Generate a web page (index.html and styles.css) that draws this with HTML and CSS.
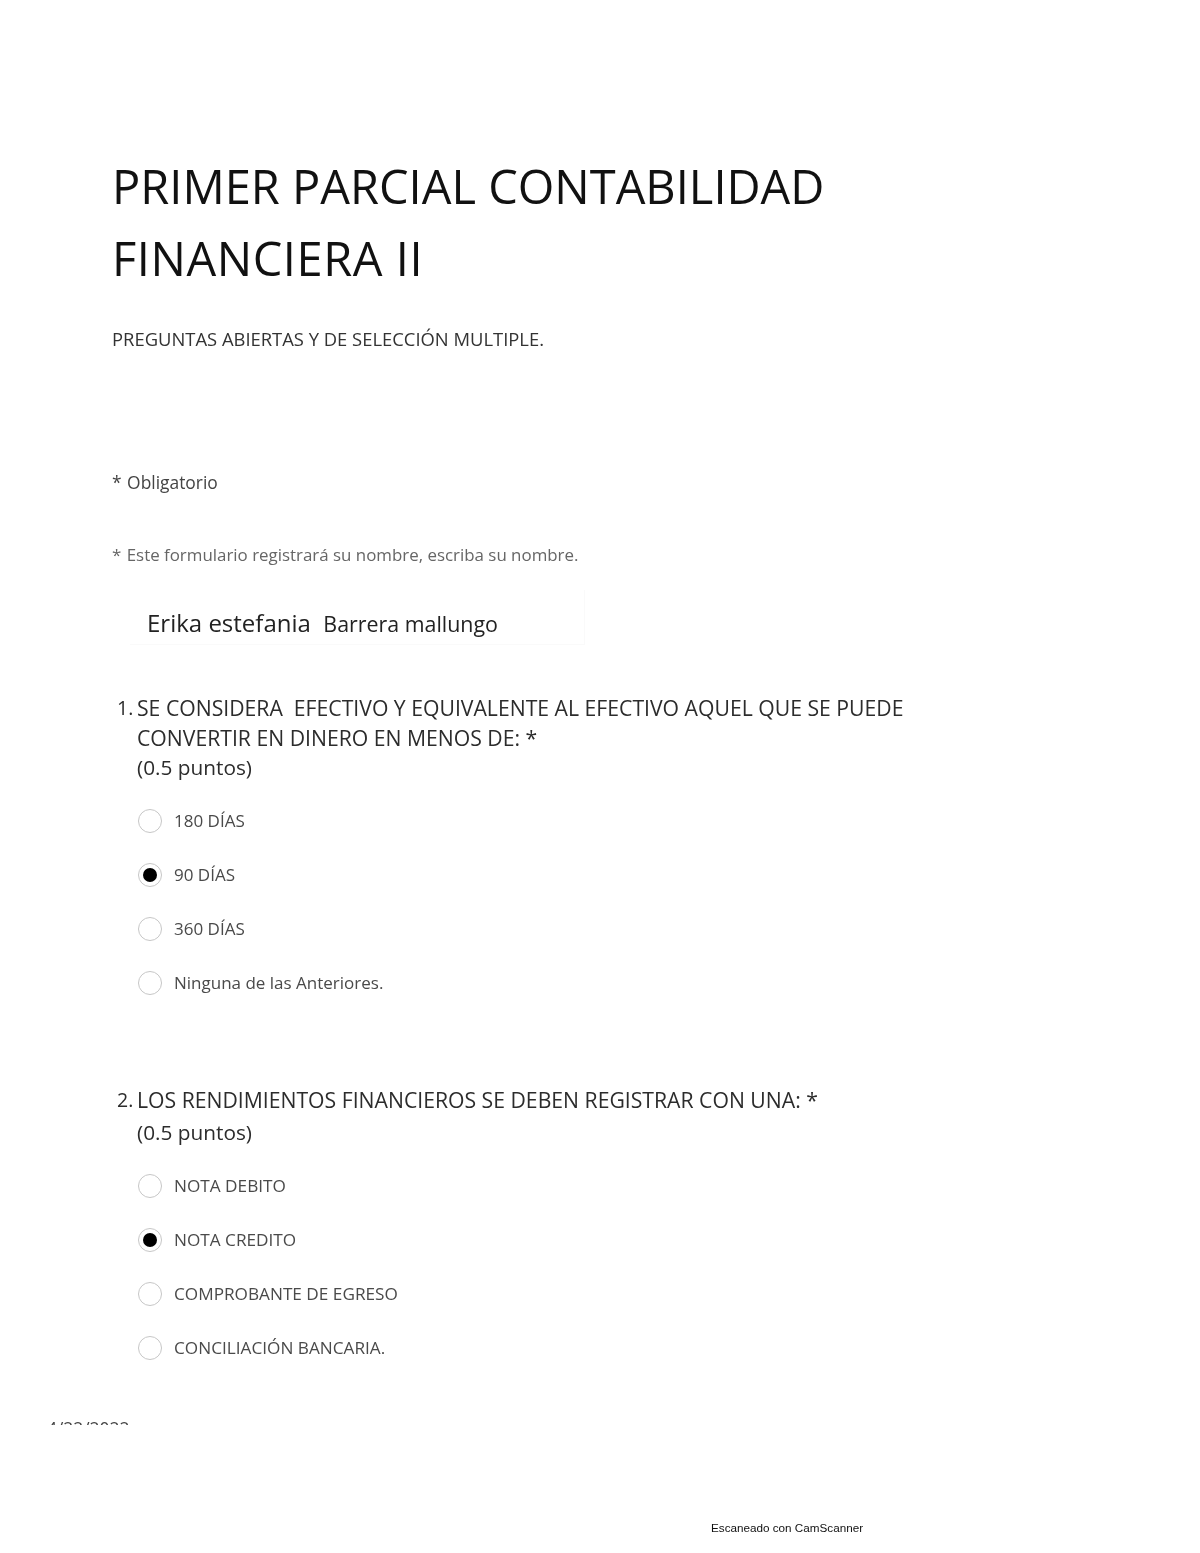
FILE: index.html
```html
<!DOCTYPE html>
<html lang="es">
<head>
<meta charset="utf-8">
<title>Primer parcial</title>
<link rel="stylesheet" href="styles.css">
</head>
<body>
<main class="page">
  <h1 class="title">PRIMER PARCIAL CONTABILIDAD<br><span class="title-second">FINANCIERA II</span></h1>
  <p class="subtitle">PREGUNTAS ABIERTAS Y DE SELECCIÓN MULTIPLE.</p>
  <p class="required">* <span class="req-gap">Obligatorio</span></p>
  <p class="notice">* <span class="req-gap">Este formulario registrará su nombre, escriba su nombre.</span></p>
  <div class="name-box">Erika estefania&nbsp; <span class="name-last">Barrera mallungo</span></div>

  <section class="question q1">
    <div class="q-head"><span class="q-num">1.</span><div>SE CONSIDERA&nbsp; EFECTIVO Y EQUIVALENTE AL EFECTIVO AQUEL QUE SE PUEDE<br>CONVERTIR EN DINERO EN MENOS DE: *<br><span class="points">(0.5 puntos)</span></div></div>
    <ul class="options">
      <li><span class="radio"></span>180 DÍAS</li>
      <li><span class="radio checked"></span>90 DÍAS</li>
      <li><span class="radio"></span>360 DÍAS</li>
      <li><span class="radio"></span>Ninguna de las Anteriores.</li>
    </ul>
  </section>

  <section class="question q2">
    <div class="q-head"><span class="q-num">2.</span><div>LOS RENDIMIENTOS FINANCIEROS SE DEBEN REGISTRAR CON UNA: *<br><span class="points">(0.5 puntos)</span></div></div>
    <ul class="options">
      <li><span class="radio"></span>NOTA DEBITO</li>
      <li><span class="radio checked"></span>NOTA CREDITO</li>
      <li><span class="radio"></span>COMPROBANTE DE EGRESO</li>
      <li><span class="radio"></span>CONCILIACIÓN BANCARIA.</li>
    </ul>
  </section>

  <div class="clipped-date"><span>4/22/2022</span></div>
  <div class="scan-mark">Escaneado con CamScanner</div>
</main>
</body>
</html>
```
FILE: styles.css
```css
html, body {
  margin: 0;
  padding: 0;
  background: #fff;
}
.page {
  width: 1200px;
  height: 1553px;
  box-sizing: border-box;
  padding-top: 150px;
  font-family: "Open Sans", "Noto Sans", sans-serif;
  color: #333;
  overflow: hidden;
  filter: blur(0.7px);
}
.title {
  margin: 0 0 0 112px;
  font-size: 47px;
  font-weight: 400;
  line-height: 72px;
  color: #111;
}
.title-second {
  letter-spacing: 0.55px;
}
.subtitle {
  margin: 33px 0 0 112px;
  font-size: 18.4px;
  line-height: 24px;
  color: #333;
}
.required {
  margin: 119px 0 0 112px;
  font-size: 17.4px;
  line-height: 24px;
  color: #444;
}
.notice {
  margin: 49px 0 0 112px;
  font-size: 16.9px;
  line-height: 24px;
  color: #666;
}
.req-gap {
  margin-left: 1px;
}
.name-box {
  margin: 23px 0 0 130px;
  width: 455px;
  height: 55px;
  box-sizing: border-box;
  padding: 8px 0 0 17px;
  font-size: 24px;
  line-height: 50px;
  color: #222;
  border-bottom: 1px solid #fafafa;
  border-right: 1px solid #fafafa;
}
.name-last {
  font-size: 21.4px;
}
.question {
  font-size: 21.2px;
  color: #2c2c2c;
}
.q1 {
  margin-top: 48px;
}
.q2 {
  margin-top: 74px;
}
.q-head {
  display: flex;
  margin-left: 117px;
  line-height: 29.5px;
}
.q-num {
  width: 20px;
  font-size: 19.5px;
}
.points {
  font-size: 20.8px;
}
.q2 .q-head {
  line-height: 32px;
}
.options {
  list-style: none;
  margin: 11px 0 0 138px;
  padding: 0;
}
.options li {
  display: flex;
  align-items: center;
  height: 54px;
  font-size: 17px;
  color: #4a4a4a;
}
.q2 .options li {
  font-size: 17.2px;
}
.radio {
  box-sizing: border-box;
  width: 24px;
  height: 24px;
  margin-right: 12px;
  border: 1.5px solid #c6c6c6;
  border-radius: 50%;
  flex: none;
  display: flex;
  align-items: center;
  justify-content: center;
}
.radio.checked::after {
  content: "";
  width: 14px;
  height: 14px;
  border-radius: 50%;
  background: #000;
}
.clipped-date {
  margin: 43px 0 0 47px;
  height: 7px;
  overflow: hidden;
  font-size: 17.4px;
  line-height: 24px;
  color: #444;
}
.clipped-date span {
  display: block;
  margin-top: -2px;
}
.scan-mark {
  margin: 95px 0 0 711px;
  font-family: "Liberation Sans", sans-serif;
  font-size: 11.7px;
  line-height: 16px;
  color: #111;
}
```
